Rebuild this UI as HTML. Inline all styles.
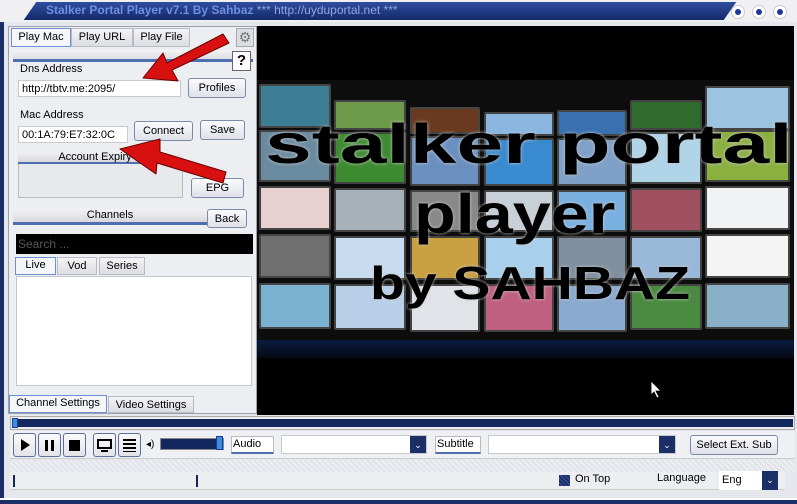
<!DOCTYPE html>
<html><head><meta charset="utf-8"><style>
*{box-sizing:border-box;margin:0;padding:0}
body{width:797px;height:504px;overflow:hidden;background:#e6e7ec;font-family:"Liberation Sans",sans-serif;font-size:11px;color:#000;position:relative}
.a{position:absolute}
.btn{position:absolute;background:linear-gradient(#fbfbfd,#dfe1e8);border:1px solid #7c8aa8;border-radius:3px;text-align:center;font-size:11px;line-height:18px}
.inp{position:absolute;background:#fff;border:1px solid #c8cad2}
.tab{position:absolute;background:linear-gradient(#f4f4f6,#dcdde2);border:1px solid #b8bac4;text-align:center;font-size:11px}
.bar{position:absolute;background:linear-gradient(#f2f2f4,#d8d9de);border-bottom:3px solid #4f6fb0;text-align:center;font-size:11px}
.tile{position:absolute;border:2px solid #444;border-radius:2px}
.pb{position:absolute;width:23px;height:24px;background:linear-gradient(#fafafa,#e2e3e8);border:1px solid #5b6e9c;border-radius:3px}
.dd{position:absolute;background:#fff;border:1px solid #c6c8d0}
.dd i{position:absolute;right:0;top:0;bottom:0;width:16px;background:#1c2e66;color:#fff;font-style:normal;font-size:9px;text-align:center;line-height:18px}
.big{position:absolute;font-family:"Liberation Sans",sans-serif;font-weight:bold;color:#000;text-shadow:0 0 3px #ccc;white-space:nowrap;transform-origin:0 0}
</style></head><body>
<div class="a" style="left:0;top:0;width:797px;height:22px;background:#f0f0f2"></div>
<div class="a" style="left:30px;top:2px;width:700px;height:18px;background:linear-gradient(#2f4d9f,#15296a);transform:skewX(-35deg)"></div>
<div class="a" style="left:46px;top:3px;font-weight:bold;font-size:12px;color:#6d8fe0">Stalker Portal Player v7.1 By Sahbaz<span style="font-weight:normal;color:#8fa6e0"> *** http://uyduportal.net ***</span></div>
<div class="a" style="left:731px;top:5px;width:14px;height:14px;border-radius:7px;background:#fff;border:1px solid #ccc"><div class="a" style="left:3px;top:3px;width:6px;height:6px;border-radius:3px;background:#1a3a9a"></div></div>
<div class="a" style="left:752px;top:5px;width:14px;height:14px;border-radius:7px;background:#fff;border:1px solid #ccc"><div class="a" style="left:3px;top:3px;width:6px;height:6px;border-radius:3px;background:#1a3a9a"></div></div>
<div class="a" style="left:773px;top:5px;width:14px;height:14px;border-radius:7px;background:#fff;border:1px solid #ccc"><div class="a" style="left:3px;top:3px;width:6px;height:6px;border-radius:3px;background:#1a3a9a"></div></div>
<div class="a" style="left:0;top:22px;width:4px;height:482px;background:#1c2e66"></div>
<div class="a" style="left:0;top:498px;width:797px;height:6px;background:#1c2e66;border-top:2px solid #fff"></div>
<div class="a" style="left:8px;top:26px;width:249px;height:388px;border:1px solid #9da0aa;background:#eceef2"></div>
<div class="tab" style="left:11px;top:28px;width:60px;height:19px;background:#f4f6fa;border-color:#6d8fd6;line-height:17px">Play Mac</div>
<div class="tab" style="left:71px;top:28px;width:62px;height:19px;line-height:17px">Play URL</div>
<div class="tab" style="left:133px;top:28px;width:57px;height:19px;line-height:17px">Play File</div>
<div class="a" style="left:236px;top:28px;width:18px;height:19px;border:1px solid #aaa;background:#dcdde2;color:#777;font-size:14px;text-align:center;line-height:17px">⚙</div>
<div class="a" style="left:13px;top:50px;width:240px;height:12px;background:linear-gradient(#f4f4f6,#dcdde2);border-bottom:3px solid #4f6fb0"></div>
<div class="a" style="left:232px;top:51px;width:19px;height:20px;border:1px solid #666;background:#fff;font-weight:bold;font-size:15px;text-align:center;line-height:18px">?</div>
<div class="a" style="left:20px;top:63px">Dns Address</div>
<div class="inp" style="left:18px;top:80px;width:163px;height:17px;padding:2px 3px">http://tbtv.me:2095/</div>
<div class="btn" style="left:188px;top:78px;width:58px;height:20px">Profiles</div>
<div class="a" style="left:20px;top:109px">Mac Address</div>
<div class="inp" style="left:18px;top:126px;width:110px;height:17px;padding:2px 3px">00:1A:79:E7:32:0C</div>
<div class="btn" style="left:134px;top:121px;width:59px;height:20px">Connect</div>
<div class="btn" style="left:200px;top:120px;width:45px;height:20px">Save</div>
<div class="a" style="left:18px;top:151px;width:165px;height:47px;border:1px solid #bbb;background:#e8e9ed"></div>
<div class="bar" style="left:18px;top:151px;width:165px;height:13px;line-height:12px;border-bottom-width:2px">Account Expiry D</div>
<div class="btn" style="left:191px;top:178px;width:53px;height:20px">EPG</div>
<div class="bar" style="left:13px;top:209px;width:194px;height:16px;line-height:12px">Channels</div>
<div class="btn" style="left:207px;top:209px;width:40px;height:19px">Back</div>
<div class="a" style="left:16px;top:234px;width:237px;height:20px;background:#000;color:#555;font-size:12px;line-height:20px;padding-left:2px">Search ...</div>
<div class="tab" style="left:15px;top:257px;width:41px;height:18px;background:#f4f6fa;border-color:#6d8fd6;line-height:15px">Live</div>
<div class="tab" style="left:57px;top:257px;width:40px;height:18px;line-height:17px">Vod</div>
<div class="tab" style="left:99px;top:257px;width:46px;height:18px;line-height:17px">Series</div>
<div class="a" style="left:16px;top:276px;width:236px;height:110px;background:#fff;border:1px solid #c4c6ce"></div>
<div class="tab" style="left:9px;top:395px;width:98px;height:18px;background:#f4f6fa;border-color:#6d8fd6;line-height:15px">Channel Settings</div>
<div class="tab" style="left:108px;top:396px;width:86px;height:17px;line-height:16px">Video Settings</div>
<div class="a" style="left:257px;top:26px;width:537px;height:389px;background:#000"></div>
<div class="a" style="left:257px;top:80px;width:537px;height:278px;background:#0c0d0c"></div>
<div class="tile" style="left:259px;top:84px;width:72px;height:44px;background:#3d7e96"></div>
<div class="tile" style="left:334px;top:100px;width:72px;height:30px;background:#6c9a4a"></div>
<div class="tile" style="left:410px;top:107px;width:70px;height:27px;background:#6a3a20"></div>
<div class="tile" style="left:484px;top:112px;width:70px;height:24px;background:#8ab6e0"></div>
<div class="tile" style="left:557px;top:110px;width:70px;height:26px;background:#3a6fb0"></div>
<div class="tile" style="left:630px;top:100px;width:72px;height:30px;background:#2f6b2d"></div>
<div class="tile" style="left:705px;top:86px;width:85px;height:44px;background:#9cc4e0"></div>
<div class="tile" style="left:259px;top:130px;width:72px;height:52px;background:#6a8aa0"></div>
<div class="tile" style="left:334px;top:132px;width:72px;height:52px;background:#3d8a30"></div>
<div class="tile" style="left:410px;top:136px;width:70px;height:50px;background:#6a90c0"></div>
<div class="tile" style="left:484px;top:138px;width:70px;height:48px;background:#3a8ad0"></div>
<div class="tile" style="left:557px;top:138px;width:70px;height:48px;background:#7fa0c8"></div>
<div class="tile" style="left:630px;top:132px;width:72px;height:52px;background:#b0d4e8"></div>
<div class="tile" style="left:705px;top:130px;width:85px;height:52px;background:#8ab040"></div>
<div class="tile" style="left:259px;top:186px;width:72px;height:44px;background:#e8d0d0"></div>
<div class="tile" style="left:334px;top:188px;width:72px;height:44px;background:#a8b0b8"></div>
<div class="tile" style="left:410px;top:190px;width:70px;height:42px;background:#888"></div>
<div class="tile" style="left:484px;top:190px;width:70px;height:42px;background:#c8d0d8"></div>
<div class="tile" style="left:557px;top:190px;width:70px;height:42px;background:#7ab0e0"></div>
<div class="tile" style="left:630px;top:188px;width:72px;height:44px;background:#a05060"></div>
<div class="tile" style="left:705px;top:186px;width:85px;height:44px;background:#f0f2f4"></div>
<div class="tile" style="left:259px;top:234px;width:72px;height:44px;background:#707070"></div>
<div class="tile" style="left:334px;top:236px;width:72px;height:44px;background:#c8dcf0"></div>
<div class="tile" style="left:410px;top:236px;width:70px;height:44px;background:#c8a040"></div>
<div class="tile" style="left:484px;top:236px;width:70px;height:44px;background:#a8d0ec"></div>
<div class="tile" style="left:557px;top:236px;width:70px;height:44px;background:#8090a0"></div>
<div class="tile" style="left:630px;top:236px;width:72px;height:44px;background:#9ab8d8"></div>
<div class="tile" style="left:705px;top:234px;width:85px;height:44px;background:#f4f4f4"></div>
<div class="tile" style="left:259px;top:283px;width:72px;height:46px;background:#7ab0d0"></div>
<div class="tile" style="left:334px;top:284px;width:72px;height:46px;background:#b8d0e8"></div>
<div class="tile" style="left:410px;top:284px;width:70px;height:48px;background:#e0e4e8"></div>
<div class="tile" style="left:484px;top:284px;width:70px;height:48px;background:#c06080"></div>
<div class="tile" style="left:557px;top:284px;width:70px;height:48px;background:#8aaad0"></div>
<div class="tile" style="left:630px;top:284px;width:72px;height:46px;background:#4a8a40"></div>
<div class="tile" style="left:705px;top:283px;width:85px;height:46px;background:#8ab0c8"></div>
<div class="a" style="left:257px;top:340px;width:537px;height:18px;background:linear-gradient(#0a1c40,#050a14)"></div>
<div class="big" style="left:265px;top:114px;font-size:56px;line-height:60px;transform:scaleX(1.5)">stalker portal</div>
<div class="big" style="left:414px;top:184px;font-size:56px;line-height:60px;transform:scaleX(1.22)">player</div>
<div class="big" style="left:370px;top:258px;font-size:46px;line-height:50px;transform:scaleX(1.24)">by SAHBAZ</div>
<svg class="a" style="left:650px;top:380px" width="12" height="20"><path d="M1 1 L1 15 L4 12 L7 18 L9 17 L6 11 L11 11 Z" fill="#fff" stroke="#000" stroke-width="0.8"/></svg>
<div class="a" style="left:10px;top:416px;width:785px;height:14px;border:1px solid #aaa;background:#eee"></div>
<div class="a" style="left:12px;top:419px;width:781px;height:8px;background:#12275e"></div>
<div class="a" style="left:12px;top:418px;width:6px;height:10px;background:#3a8ee0;border:1px solid #1a3a9a"></div>
<div class="a" style="left:10px;top:431px;width:785px;height:28px;background:#eef0f4;border-bottom:1px solid #ccc"></div>
<div class="pb" style="left:13px;top:433px"><div class="a" style="left:7px;top:5px;border-left:9px solid #000;border-top:6px solid transparent;border-bottom:6px solid transparent"></div></div>
<div class="pb" style="left:38px;top:433px"><div class="a" style="left:6px;top:6px;width:3px;height:11px;background:#000"></div><div class="a" style="left:12px;top:6px;width:3px;height:11px;background:#000"></div></div>
<div class="pb" style="left:63px;top:433px"><div class="a" style="left:5px;top:6px;width:11px;height:11px;background:#000"></div></div>
<div class="pb" style="left:93px;top:433px"><div class="a" style="left:3px;top:5px;width:15px;height:10px;border:2px solid #000"></div><div class="a" style="left:7px;top:16px;width:7px;height:2px;background:#000"></div></div>
<div class="pb" style="left:118px;top:433px;background:repeating-linear-gradient(#000 0 2px,transparent 2px 4px) 4px 5px/13px 13px no-repeat,linear-gradient(#fafafa,#e2e3e8)"></div>
<div class="a" style="left:146px;top:439px;font-size:10px">◂)</div>
<div class="a" style="left:160px;top:438px;width:64px;height:12px;background:#12275e;border:1px solid #888"></div>
<div class="a" style="left:216px;top:436px;width:7px;height:14px;background:#3a8ee0;border:1px solid #1a3a9a"></div>
<div class="a" style="left:231px;top:436px;width:43px;height:18px;background:#fff;border:1px solid #bbb;border-bottom:2px solid #4f6fb0;font-size:11px;padding-left:1px;line-height:15px">Audio</div>
<div class="dd" style="left:281px;top:435px;width:146px;height:19px"><i>⌄</i></div>
<div class="a" style="left:435px;top:436px;width:46px;height:18px;background:#fff;border:1px solid #bbb;border-bottom:2px solid #4f6fb0;font-size:11px;padding-left:1px;line-height:15px">Subtitle</div>
<div class="dd" style="left:488px;top:435px;width:188px;height:19px"><i>⌄</i></div>
<div class="btn" style="left:690px;top:435px;width:88px;height:20px">Select Ext. Sub</div>
<div class="a" style="left:10px;top:460px;width:785px;height:12px;background:repeating-linear-gradient(45deg,#e2e3e8 0 2px,#eceef2 2px 4px)"></div>
<div class="a" style="left:10px;top:472px;width:775px;height:18px;background:#eceef0;border-bottom:1px solid #ccc"></div>
<div class="a" style="left:13px;top:475px;width:2px;height:12px;background:#12275e"></div>
<div class="a" style="left:196px;top:475px;width:2px;height:12px;background:#12275e"></div>
<div class="a" style="left:559px;top:475px;width:11px;height:11px;background:repeating-linear-gradient(45deg,#1c2e66 0 2px,#3a55a0 2px 3px)"></div>
<div class="a" style="left:575px;top:473px;font-size:11px">On Top</div>
<div class="a" style="left:657px;top:472px;font-size:11px">Language</div>
<div class="dd" style="left:719px;top:471px;width:59px;height:19px;border:none;padding-left:3px;line-height:18px">Eng<i>⌄</i></div>
<svg class="a" style="left:0;top:0" width="797" height="504">
<g fill="#d81010" stroke="#6a0000" stroke-width="1" stroke-linejoin="round">
<path d="M223 34 L229 43 L172 70 L178 81 L143 78 L163 53 L167 63 Z"/>
<path d="M226 172 L223 183 L157 163 L156 174 L120 149 L160 139 L160 152 Z"/>
</g></svg>
</body></html>
